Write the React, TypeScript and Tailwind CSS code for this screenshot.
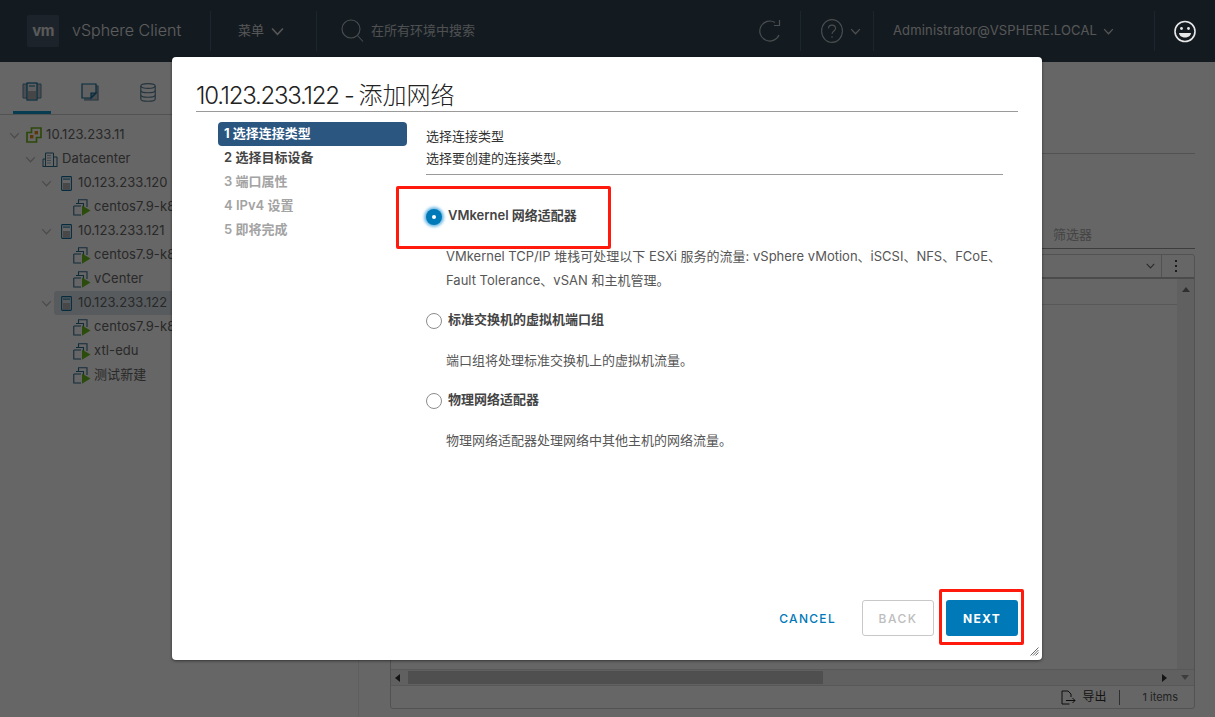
import React from "react";

function Chevron({ className = "" }: { className?: string }) {
  return (
    <svg viewBox="0 0 12 8" className={className} fill="none" stroke="currentColor" strokeWidth="1.4">
      <path d="M1 1.2 L6 6.6 L11 1.2" />
    </svg>
  );
}

function HostIcon() {
  return (
    <svg width="11" height="15" viewBox="0 0 11 15">
      <rect x="2" y="7" width="7" height="6.5" fill="#b4b4b4" />
      <rect x="2" y="2.6" width="7" height="1" fill="#0f6d96" />
      <rect x="0.6" y="0.6" width="9.8" height="13.8" rx="0.8" fill="none" stroke="#0e6f9b" strokeWidth="1.1" />
    </svg>
  );
}

function VmIcon() {
  return (
    <svg width="18" height="17" viewBox="0 0 18 17">
      <path d="M5.5 4 V0.8 H14 V8" fill="none" stroke="#2f6d8c" strokeWidth="1.1" />
      <path d="M3 4.5 H10.5 V8 M0.8 7 H8 M0.8 7 V16 H8" fill="none" stroke="#2f6d8c" strokeWidth="1.1" />
      <path d="M9 6.5 L17.5 11.5 L9 16.8 Z" fill="#6bbf1f" />
    </svg>
  );
}

function ClusterIcon() {
  return (
    <svg width="16" height="16" viewBox="0 0 16 16">
      <path d="M5.5 1 H15 V10.5 H10.5 V15 H1 V5.5 H5.5 Z" fill="none" stroke="#72b51c" strokeWidth="1.7" />
      <rect x="4" y="8" width="3.4" height="3.4" fill="#e68a10" />
      <rect x="8.6" y="4" width="3.4" height="3.4" fill="#e68a10" />
    </svg>
  );
}

function DatacenterIcon() {
  return (
    <svg width="16" height="15" viewBox="0 0 16 15" fill="none" stroke="#2f6d8c" strokeWidth="1">
      <path d="M3.5 14 V1 H11.5 V14" />
      <path d="M11.5 5 H15 V14" />
      <path d="M0.5 14.5 H15.5" />
      <path d="M1 14 V7 H3.5" />
      <path d="M5.5 3.5 H9.5 M5.5 6 H9.5 M5.5 8.5 H9.5 M5.5 11 H9.5" strokeDasharray="1 1" />
    </svg>
  );
}

type TreeRow = { depth: number; label: string; kind: "cluster" | "dc" | "host" | "vm"; selected?: boolean };

const rows: TreeRow[] = [
  { depth: 0, label: "10.123.233.11", kind: "cluster" },
  { depth: 1, label: "Datacenter", kind: "dc" },
  { depth: 2, label: "10.123.233.120", kind: "host" },
  { depth: 3, label: "centos7.9-k8s", kind: "vm" },
  { depth: 2, label: "10.123.233.121", kind: "host" },
  { depth: 3, label: "centos7.9-k8s", kind: "vm" },
  { depth: 3, label: "vCenter", kind: "vm" },
  { depth: 2, label: "10.123.233.122", kind: "host", selected: true },
  { depth: 3, label: "centos7.9-k8s", kind: "vm" },
  { depth: 3, label: "xtl-edu", kind: "vm" },
  { depth: 3, label: "测试新建", kind: "vm" },
];

const indent = ["pl-[8px]", "pl-[24px]", "pl-[40px]", "pl-[56px]"];

function Row({ row }: { row: TreeRow }) {
  return (
    <div className={`flex h-[24px] items-center ${indent[row.depth]}`}>
      <div className="flex w-[12px] shrink-0 justify-center text-[#bbbbbb]">
        {row.kind !== "vm" && <Chevron className="h-[7px] w-[11px]" />}
      </div>
      <div className={`ml-[2px] flex h-[24px] min-w-0 flex-1 items-center pl-[3px] rounded-[3px] ${row.selected ? "bg-[#d9e4ea]" : ""}`}>
        <div className="flex w-[18px] shrink-0 justify-center">
          {row.kind === "cluster" && <ClusterIcon />}
          {row.kind === "dc" && <DatacenterIcon />}
          {row.kind === "host" && <HostIcon />}
          {row.kind === "vm" && <VmIcon />}
        </div>
        <span className="ml-[3px] whitespace-nowrap text-[13px] tracking-[0.1px] text-[#666]">{row.label}</span>
      </div>
    </div>
  );
}

function Divider() {
  return <div className="h-[40px] w-px shrink-0 bg-[#4d6070]" />;
}

function Header() {
  return (
    <header className="flex h-[62px] shrink-0 items-center bg-[#314351] text-[#fafafa]">
      <div className="ml-[27px] flex h-[32px] w-[32px] shrink-0 items-center justify-center rounded-[2px] bg-[#48596a] text-[15px] font-bold tracking-[-0.5px] text-[#e0e0e0]">
        vm
      </div>
      <div className="ml-[13px] w-[138px] shrink-0 whitespace-nowrap pb-[2px] text-[16px] font-light text-[#e8e8e8]">vSphere Client</div>
      <Divider />
      <div className="flex w-[105px] shrink-0 items-center pl-[27px] text-[13px] text-[#d8d8d8]">
        <span>菜单</span>
        <Chevron className="ml-[7px] h-[9px] w-[13px]" />
      </div>
      <Divider />
      <div className="flex items-center pl-[24px] text-[13px] text-[#c2c8cc]">
        <svg width="23" height="24" viewBox="0 0 23 24" fill="none" stroke="#b9c2c8" strokeWidth="1.1">
          <circle cx="10" cy="10" r="9" />
          <path d="M16.5 16.5 L22 22.5" />
        </svg>
        <span className="ml-[7px]">在所有环境中搜索</span>
      </div>
      <div className="flex-1" />
      <div className="flex items-center pr-[19px]">
        <svg width="22" height="24" viewBox="0 0 22 24" fill="none" stroke="#b9c2c8" strokeWidth="1.2">
          <path d="M20 16 A10 10 0 1 1 16 3.5" />
          <path d="M20.5 1 V6.5 H15" />
        </svg>
      </div>
      <Divider />
      <div className="flex w-[72px] shrink-0 items-center pl-[20px]">
        <svg width="22" height="24" viewBox="0 0 22 24" fill="none" stroke="#b9c2c8" strokeWidth="1.1">
          <ellipse cx="11" cy="12" rx="10.4" ry="11.4" />
          <path d="M7.5 9.5 C7.5 5 14.5 5 14.5 9.5 C14.5 12 11 12 11 15" />
          <circle cx="11" cy="18" r="0.8" fill="#b9c2c8" stroke="none" />
        </svg>
        <Chevron className="ml-[7px] h-[7px] w-[11px] text-[#c2c8cc]" />
      </div>
      <Divider />
      <div className="flex w-[280px] shrink-0 items-center pl-[19px] text-[13px] text-[#d8d8d8]">
        <span className="whitespace-nowrap tracking-[0.15px]">Administrator@VSPHERE.LOCAL</span>
        <Chevron className="ml-[6px] h-[7px] w-[11px]" />
      </div>
      <Divider />
      <div className="w-[60px] shrink-0" />
    </header>
  );
}

function Background() {
  return (
    <div className="flex h-[717px] w-[1215px] flex-col bg-white">
      <Header />
      <div className="flex min-h-0 flex-1">
        <aside className="w-[359px] shrink-0 border-r border-[#eeeeee]">
          <div className="flex h-[53px] items-end border-b border-[#cccccc] pl-[13px]">
            <div className="flex h-[49px] w-[38px] items-center justify-center border-b-[3px] border-[#0f9ad0] pt-[7px]">
              <svg width="20" height="19" viewBox="0 0 20 19" fill="none">
                <path d="M1 2 H6 V16 H1 Z M14 2 H19 V16 H14 Z" fill="#b9c4ca" stroke="#5d8399" />
                <rect x="5" y="1" width="10" height="17" fill="#eeeeee" stroke="#0e6f9b" strokeWidth="1.2" />
                <rect x="6" y="9" width="8" height="8" fill="#b0b0b0" />
                <path d="M7 4 H13" stroke="#0e6f9b" />
              </svg>
            </div>
            <div className="ml-[29px] flex h-[49px] w-[20px] items-center justify-center pt-[5px]">
              <svg width="18" height="18" viewBox="0 0 18 18" fill="none" stroke="#0e6f9b" strokeWidth="1.2">
                <path d="M3 3 H17 V17 H3" fill="#b9c4ca" stroke="#5d8399" />
                <path d="M1 1 H15 V10 L10 15 H1 Z" fill="#f3f3f3" />
                <path d="M15 10 H10 V15 Z" fill="#8aa0ad" />
              </svg>
            </div>
            <div className="ml-[38px] flex h-[49px] w-[20px] items-center justify-center pt-[5px]">
              <svg width="16" height="19" viewBox="0 0 16 19" fill="none" stroke="#5d8399" strokeWidth="1.2">
                <ellipse cx="8" cy="3" rx="7.2" ry="2.4" />
                <path d="M0.8 3 V16 C0.8 19 15.2 19 15.2 16 V3" />
                <path d="M0.8 7.5 C0.8 10.5 15.2 10.5 15.2 7.5 M0.8 12 C0.8 15 15.2 15 15.2 12" />
              </svg>
            </div>
          </div>
          <div className="pt-[8px]">
            {rows.map((r, i) => (
              <Row key={i} row={r} />
            ))}
          </div>
        </aside>
        <section className="min-w-0 flex-1 pl-[31px] pr-[20px]">
          <div className="h-[92px] border-b border-[#cccccc]" />
          <div className="flex h-[95px] items-end border-b border-[#999999] pb-[4px] pl-[663px] text-[13px] text-[#aaaaaa]">
            筛选器
          </div>
          <div className="mt-[5px] flex h-[455px] flex-col rounded-[3px] border border-[#cccccc]">
            <div className="flex h-[24px] shrink-0 items-center justify-end border-b-[2px] border-[#bbbbbb]">
              <Chevron className="mr-[6px] h-[6px] w-[9px] text-[#666]" />
              <div className="h-full w-px bg-[#cccccc]" />
              <div className="flex w-[32px] justify-start pl-[13px]">
                <svg width="2" height="12" viewBox="0 0 2 12" fill="#444">
                  <rect x="0" y="0" width="2" height="2" />
                  <rect x="0" y="5" width="2" height="2" />
                  <rect x="0" y="10" width="2" height="2" />
                </svg>
              </div>
            </div>
            <div className="flex min-h-0 flex-1">
              <div className="min-w-0 flex-1">
                <div className="h-[26px] border-b border-[#dddddd]" />
              </div>
              <div className="flex w-[17px] shrink-0 justify-center bg-[#f1f1f1] pt-[8px]">
                <div className="h-0 w-0 border-x-[4px] border-b-[5px] border-x-transparent border-b-[#777]" />
              </div>
            </div>
            <div className="flex h-[17px] shrink-0 items-center border-y border-[#dddddd] bg-[#f1f1f1]">
              <div className="ml-[4px] h-0 w-0 border-y-[4px] border-r-[5px] border-y-transparent border-r-[#333]" />
              <div className="ml-[8px] h-[13px] w-[415px] bg-[#c6c6c6]" />
              <div className="flex-1" />
              <div className="h-0 w-0 border-y-[4px] border-l-[5px] border-y-transparent border-l-[#333]" />
              <div className="ml-[14px] mr-[5px] h-0 w-0 border-x-[4px] border-t-[5px] border-x-transparent border-t-[#999]" />
            </div>
            <div className="flex h-[22px] shrink-0 items-center justify-end pr-[16px] text-[11px] text-[#565656]">
              <svg width="15" height="15" viewBox="0 0 15 15" fill="none" stroke="#222" strokeWidth="1">
                <path d="M8.5 14 H1 V1 H7 L10 4 V7" />
                <path d="M5 10.5 H14 M11.5 8 L14 10.5 L11.5 13" />
              </svg>
              <span className="ml-[6px] text-[12px] text-[#333]">导出</span>
              <div className="ml-[13px] h-[15px] w-px bg-[#777]" />
              <span className="ml-[22px]">1 items</span>
            </div>
          </div>
        </section>
      </div>
    </div>
  );
}

function Radio({ checked }: { checked?: boolean }) {
  if (checked) {
    return (
      <span className="flex h-[16px] w-[16px] shrink-0 items-center justify-center rounded-full bg-[#0079b8] shadow-[0_0_3px_2px_#6bb8e4]">
        <span className="h-[4px] w-[4px] rounded-full bg-white" />
      </span>
    );
  }
  return <span className="h-[16px] w-[16px] shrink-0 rounded-full border border-[#8c8c8c] bg-white" />;
}

function Option({ checked, label, children }: { checked?: boolean; label: string; children: React.ReactNode }) {
  return (
    <div className="flex flex-col gap-[16px]">
      <div className="flex h-[24px] items-center gap-[6px]">
        <Radio checked={checked} />
        <span className="whitespace-nowrap pb-[2px] text-[13px] font-semibold text-[#444]">{label}</span>
      </div>
      <p className="-mt-[1px] whitespace-nowrap pb-[1px] pl-[20px] text-[13px] leading-[24px] text-[#565656]">{children}</p>
    </div>
  );
}

const steps: { t: string; cls: string }[] = [
  { t: "1 选择连接类型", cls: "bg-[#2b5680] font-bold text-white rounded-[4px]" },
  { t: "2 选择目标设备", cls: "font-semibold text-[#444]" },
  { t: "3 端口属性", cls: "font-semibold text-[#a3a3a3]" },
  { t: "4 IPv4 设置", cls: "font-semibold text-[#a3a3a3]" },
  { t: "5 即将完成", cls: "font-semibold text-[#a3a3a3]" },
];

function Modal() {
  return (
    <div className="absolute left-[172px] top-[57px] z-20 flex h-[603px] w-[870px] flex-col rounded-[4px] bg-white shadow-[0_1px_3px_rgba(0,0,0,0.5)]">
      <div className="mx-[24px] flex h-[55px] shrink-0 items-end border-b border-[#9a9a9a]">
        <h1 className="whitespace-pre text-[24px] font-light leading-[30px] text-[#222]">
          <span className="tracking-[-1.25px]">10.123.233.122</span>
          <span className="tracking-[-1.5px]"> - </span>添加网络
        </h1>
      </div>
      <div className="flex min-h-0 flex-1 pl-[46px] pt-[10px]">
        <nav className="w-[189px] shrink-0">
          {steps.map((s) => (
            <div key={s.t} className={`flex h-[24px] items-center pl-[6px] text-[13px] ${s.cls}`}>
              {s.t}
            </div>
          ))}
        </nav>
        <div className="ml-[19px] w-[577px]">
          <div className="border-b border-[#9a9a9a] pb-[5px] pt-[3px] text-[13px] leading-[22px] text-[#333]">
            <div>选择连接类型</div>
            <div>选择要创建的连接类型。</div>
          </div>
          <div className="mt-[30px] flex flex-col gap-[16px]">
            <Option checked label="VMkernel 网络适配器">
              VMkernel TCP/IP 堆栈可处理以下 ESXi 服务的流量: vSphere vMotion、iSCSI、NFS、FCoE、
              <br />
              Fault Tolerance、vSAN 和主机管理。
            </Option>
            <Option label="标准交换机的虚拟机端口组">端口组将处理标准交换机上的虚拟机流量。</Option>
            <Option label="物理网络适配器">物理网络适配器处理网络中其他主机的网络流量。</Option>
          </div>
        </div>
      </div>
      <div className="flex shrink-0 items-center justify-end gap-[12px] pb-[24px] pr-[24px]">
        <button className="mr-[14px] pt-[1px] text-[12px] font-medium tracking-[1.3px] text-[#0079b8]">CANCEL</button>
        <button className="h-[36px] w-[72px] rounded-[3px] border border-[#c8c8c8] pt-[1px] text-[12px] font-medium tracking-[1.5px] text-[#bdbdbd]">
          BACK
        </button>
        <button className="h-[36px] w-[72px] rounded-[3px] bg-[#0079b8] pt-[1px] text-[12px] font-bold tracking-[1.3px] text-white">
          NEXT
        </button>
      </div>
      <svg className="absolute bottom-[4px] right-[3px]" width="9" height="9" viewBox="0 0 9 9" stroke="#444" strokeWidth="0.8" fill="none">
        <path d="M0.5 8.5 L8.5 0.5 M3 8.5 L8.5 3 M5.5 8.5 L8.5 5.5" />
      </svg>
    </div>
  );
}

export default function App() {
  return (
    <div className="relative h-[717px] w-[1215px] overflow-hidden [font-family:Inter,'Noto_Sans_CJK_SC',sans-serif]">
      <Background />
      <div className="absolute inset-0 z-10 bg-black/60" />
      <svg className="absolute left-[1174px] top-[20px] z-20" width="22" height="23" viewBox="0 0 22 23" fill="none" stroke="#e8e8e8" strokeWidth="1.6">
        <circle cx="11" cy="11.5" r="10" />
        <circle cx="7.5" cy="8.5" r="1.4" fill="#e8e8e8" stroke="none" />
        <circle cx="14.5" cy="8.5" r="1.4" fill="#e8e8e8" stroke="none" />
        <path d="M5 13 H17 C16.5 19 5.5 19 5 13 Z" fill="#e8e8e8" stroke="none" />
      </svg>
      <Modal />
      <div className="absolute left-[396px] top-[186px] z-30 h-[63px] w-[215px] rounded-[2px] border-[3px] border-[#ff1a0d]" />
      <div className="absolute left-[939px] top-[589px] z-30 h-[56px] w-[85px] rounded-[2px] border-[3px] border-[#ff1a0d]" />
    </div>
  );
}
